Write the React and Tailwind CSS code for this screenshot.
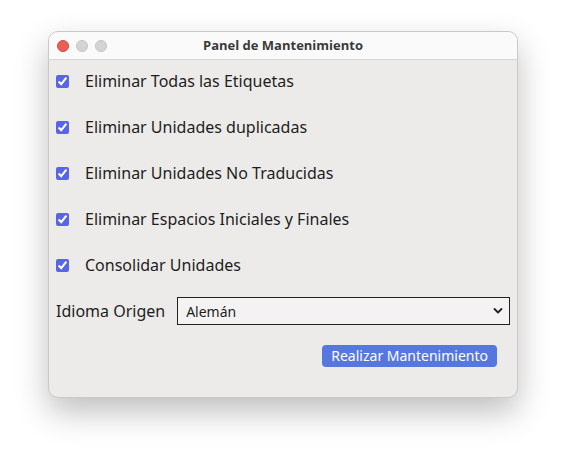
import React, { useState } from "react";

const OPTIONS = [
  "Eliminar Todas las Etiquetas",
  "Eliminar Unidades duplicadas",
  "Eliminar Unidades No Traducidas",
  "Eliminar Espacios Iniciales y Finales",
  "Consolidar Unidades",
];

const App = () => {
  const [checked, setChecked] = useState(OPTIONS.map(() => true));
  const [lang, setLang] = useState("Alemán");

  return (
    <div className="w-[566px] h-[465px] bg-white pt-[31px] pl-[48px]" style={{ fontFamily: '"Noto Sans", sans-serif' }}>
      {/* Window */}
      <div className="w-[470px] h-[367px] rounded-[10px] bg-[#ECEBE9] border border-[#c9c9c9] shadow-[0_14px_32px_rgba(0,0,0,0.25)] overflow-hidden flex flex-col">
        <div className="relative h-[28px] bg-[#FAFAFA] border-b border-[#d6d6d6] flex items-center justify-center">
          <div className="absolute left-[8px] top-[8px] flex gap-[7px]">
            <span className="w-[12px] h-[12px] rounded-full bg-[#EC5F57] border border-[#d4493f]" />
            <span className="w-[12px] h-[12px] rounded-full bg-[#D5D4D4] border border-[#c4c3c3]" />
            <span className="w-[12px] h-[12px] rounded-full bg-[#D5D4D4] border border-[#c4c3c3]" />
          </div>
          <span className="text-[13px] font-bold text-[#3a3a3a]" style={{ fontFamily: '"Open Sans", "Noto Sans", sans-serif' }}>
            Panel de Mantenimiento
          </span>
        </div>

        <div className="flex flex-col px-[7px] pt-[8px]">
          {OPTIONS.map((label, i) => (
            <label key={label} className="flex items-center h-[26px] mb-[20px] cursor-pointer">
              <input
                type="checkbox"
                checked={checked[i]}
                onChange={() => setChecked((c) => c.map((v, j) => (j === i ? !v : v)))}
                className="w-[13px] h-[13px] m-0 accent-[#5865E6]"
              />
              <span className="ml-[16px] text-[16px] text-[#1e1e1e] whitespace-nowrap">{label}</span>
            </label>
          ))}

          <div className="flex items-center -mt-[1px]">
            <span className="text-[16px] text-[#1e1e1e] whitespace-nowrap shrink-0">Idioma Origen</span>
            <div className="relative ml-[12px] flex-1">
              <select
                value={lang}
                onChange={(e) => setLang(e.target.value)}
                className="appearance-none w-full h-[28px] border border-[#222] bg-[#F4F2F2] pl-[8px] text-[14px] text-[#1e1e1e] outline-none"
              >
                <option>Alemán</option>
                <option>Inglés</option>
                <option>Francés</option>
              </select>
              <svg className="absolute right-[7px] top-[10px] pointer-events-none" width="10" height="8" viewBox="0 0 10 8">
                <path d="M1.5 2 L5 5.5 L8.5 2" fill="none" stroke="#222" strokeWidth="1.8" strokeLinecap="round" strokeLinejoin="round" />
              </svg>
            </div>
          </div>

          <div className="flex justify-end pr-[13px] mt-[20px]">
            <button className="h-[22px] px-[9px] rounded-[4px] bg-[#5677E0] text-white text-[14px] leading-none">
              Realizar Mantenimiento
            </button>
          </div>
        </div>
      </div>
    </div>
  );
};

export default App;
